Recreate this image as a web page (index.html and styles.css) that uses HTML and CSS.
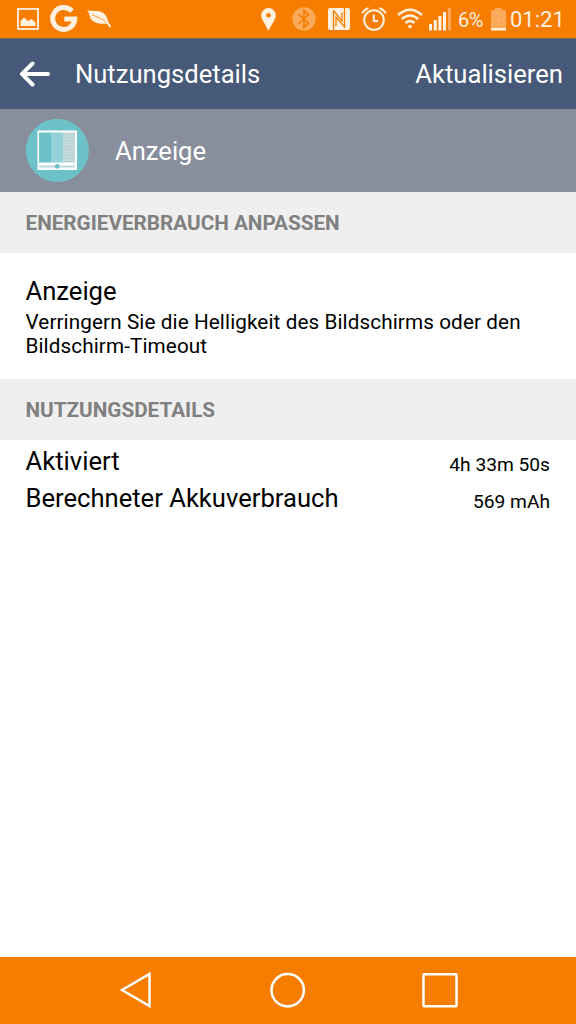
FILE: index.html
```
<!DOCTYPE html>
<html lang="de">
<head>
  <meta charset="UTF-8" />
  <meta name="viewport" content="width=device-width, initial-scale=1" />
  <title>Nutzungsdetails</title>
  <link rel="stylesheet" href="styles.css">
</head>
<body>
  <header class="status-bar">
    <div class="notifications">
      <!-- picture -->
      <svg width="22" height="22" viewBox="0 0 22 22">
        <rect x="1" y="1" width="20" height="20" fill="none" stroke="#fff0e0" stroke-width="1.800" />
        <path d="M3.500 18V13L7 9.500L11 13L14.500 11L18.500 14.500V18Z" fill="#fff0e0" />
      </svg>
      <!-- google -->
      <svg class="google" width="28" height="28" viewBox="0 0 28 28">
        <path d="M22 6.200A11 11 0 1 0 24.700 14H14.300" fill="none" stroke="#fff0e0" stroke-width="5" />
      </svg>
      <!-- leaf -->
      <svg class="leaf" width="25" height="18" viewBox="0 0 25 18">
        <path d="M0 .5C7 1.500 14-.5 18 4.500C20 7 20.500 9.500 21.500 12L24.300 17L22.500 17.500L20 13.500C11 15 4 11.500 3 7C2.500 4.500 2 2.500 0 .5Z" fill="#fff0e0" />
        <path d="M5 5C10 6.500 15 8.500 19 12" fill="none" stroke="#f77d00" stroke-width=".7" />
      </svg>
    </div>
    <div class="system-icons">
      <!-- location -->
      <svg width="15" height="23" viewBox="0 0 15 23">
        <path d="M7.500 0A7.300 7.300 0 0 0 .2 7.300C.2 12 5 17 7.500 23C10 17 14.800 12 14.800 7.300A7.300 7.300 0 0 0 7.500 0Z" fill="#fff0e0" />
        <circle cx="7.500" cy="7.200" r="2.300" fill="#f77d00" />
      </svg>
      <!-- bluetooth -->
      <svg class="bluetooth" width="24" height="24" viewBox="0 0 24 24">
        <circle cx="12" cy="12" r="11.700" fill="#fbaa5a" />
        <path d="M6.500 7L16.500 16.500L12 20.500V3.500L16.500 7.500L6.500 17" fill="none" stroke="#f77d00" stroke-width="1.700" />
      </svg>
      <!-- nfc -->
      <svg class="nfc" width="22" height="22" viewBox="0 0 22 22">
        <rect width="22" height="22" rx="2" fill="#fff0e0" />
        <path d="M5.500 22V2.500M5.500 2.500L14 13V4.500M16.500 0V19L8 9V18" fill="none" stroke="#f77d00" stroke-width="1.300" />
      </svg>
      <!-- alarm -->
      <svg class="alarm" width="26" height="24" viewBox="0 0 26 24">
        <g fill="none" stroke="#fff0e0" stroke-width="2">
          <circle cx="13" cy="13" r="9.800" />
          <path d="M12.800 7.500V14H17" />
          <path d="M1 6.200Q3.200 2.500 7.500 1M25 6.200Q22.800 2.500 18.500 1" />
        </g>
      </svg>
      <!-- wifi -->
      <svg class="wifi" width="26" height="21" viewBox="0 0 26 21">
        <g fill="none" stroke="#fff0e0" stroke-width="2.600">
          <path d="M1 7Q13-3.500 25 7" />
          <path d="M4.800 11Q13 4 21.200 11" />
          <path d="M8.500 15Q13 11 17.500 15" />
        </g>
        <circle cx="13" cy="18.500" r="1.800" fill="#fff0e0" />
      </svg>
      <!-- signal -->
      <svg class="signal" width="22" height="23" viewBox="0 0 22 23">
        <path d="M0 16H3V22.500H0ZM4.800 12H7.800V22.500H4.800ZM9.400 8H12.400V22.500H9.400ZM14 4H17V22.500H14Z" fill="#fff0e0" />
        <path d="M19 0H22V22.500H19Z" fill="#fbaa5a" />
      </svg>
      <span class="percent">6%</span>
      <!-- battery -->
      <svg class="battery" width="15" height="23" viewBox="0 0 15 23">
        <path d="M4 0H11V2H13Q15 2 15 4V20H0V4Q0 2 2 2H4Z" fill="#fbaa5a" />
        <rect y="20" width="15" height="2.500" fill="#fff0e0" />
        <rect x="7" y="12" width="1" height="1" fill="#fff0e0" />
      </svg>
      <span class="clock">01:21</span>
    </div>
  </header>

  <nav class="toolbar">
    <svg class="back" width="32" height="26" viewBox="0 0 32 26">
      <path d="M13.500 2.500L3 13L13.500 23.500M3.500 13H29" fill="none" stroke="#fff" stroke-width="4" stroke-linecap="round" stroke-linejoin="round" />
    </svg>
    <h1>Nutzungsdetails</h1>
    <span class="refresh">Aktualisieren</span>
  </nav>

  <div class="app-header">
    <svg width="64" height="64" viewBox="0 0 64 64">
      <circle cx="32.300" cy="31.500" r="31.600" fill="#6dc1c8" />
      <rect x="12.500" y="11.500" width="39.500" height="39.500" fill="#fff" />
      <rect x="14" y="13.500" width="12" height="30" fill="#6dc1c8" />
      <rect x="26" y="13.500" width="12" height="30" fill="#93d2d8" />
      <rect x="38" y="13.500" width="12" height="30" fill="#c5d8da" />
      <path d="M38.500 15.500H49M39.500 18.500H49M38.500 21.500H49M39.500 24.500H49M38.500 27.500H49M39.500 30.500H49M38.500 33.500H49M39.500 36.500H49M38.500 39.500H49M39.500 42.500H49" stroke="#8fc8cd" stroke-dasharray="1 2" />
      <path d="M14 47.500H50" stroke="#b9d7da" stroke-width="2" />
      <circle cx="32.200" cy="47.300" r="2.400" fill="#6dc1c8" />
    </svg>
    <span class="app-name">Anzeige</span>
  </div>

  <main>
    <h2>ENERGIEVERBRAUCH ANPASSEN</h2>
    <div class="setting">
      <div class="setting-title">Anzeige</div>
      <p>Verringern Sie die Helligkeit des Bildschirms oder den Bildschirm-Timeout</p>
    </div>

    <h2>NUTZUNGSDETAILS</h2>
    <div class="row">
      <span class="label">Aktiviert</span>
      <span class="value">4h 33m 50s</span>
    </div>
    <div class="row">
      <span class="label">Berechneter Akkuverbrauch</span>
      <span class="value">569 mAh</span>
    </div>
  </main>

  <footer class="nav-bar">
    <svg width="32" height="36" viewBox="0 0 32 36">
      <path d="M29.500 2V34L2 18Z" fill="none" stroke="#fff" stroke-width="2.500" />
    </svg>
    <svg width="36" height="36" viewBox="0 0 36 36">
      <circle cx="18.700" cy="18.200" r="16.200" fill="none" stroke="#fff" stroke-width="2.500" />
    </svg>
    <svg width="36" height="36" viewBox="0 0 36 36">
      <rect x="1.500" y="2.200" width="33" height="32" rx=".5" fill="none" stroke="#fff" stroke-width="2.500" />
    </svg>
  </footer>
</body>
</html>
```
FILE: styles.css
```
* {
  box-sizing: border-box;
}
body {
  margin: 0;
  height: 1024px;
  display: flex;
  flex-direction: column;
  font-family: Roboto, sans-serif;
  background: #fff;
  color: #000;
  overflow: hidden;
}
svg {
  display: block;
  flex: none;
}
.status-bar {
  height: 39px;
  padding: 0 12px 0 17px;
  display: flex;
  justify-content: space-between;
  background: #f77d00;
  border-bottom: 1px solid #80664f;
  color: #fff0e0;
}
.notifications, .system-icons {
  display: flex;
  align-items: center;
}
.google {
  margin-left: 11px;
}
.leaf {
  margin-left: 9px;
}
.bluetooth {
  margin-left: 16px;
}
.nfc {
  margin-left: 12px;
}
.alarm {
  margin-left: 11px;
}
.wifi {
  margin: 0 0 2px 10px;
}
.signal {
  margin-left: 6px;
}
.percent {
  width: 27px;
  margin: 2px 0 0 7px;
  font-size: 20px;
  line-height: 38px;
  letter-spacing: -0.4px;
}
.battery {
  margin-left: 6px;
}
.clock {
  width: 54px;
  margin: 2px 0 0 4px;
  font-size: 22px;
  line-height: 38px;
  white-space: nowrap;
}
.toolbar {
  height: 70px;
  padding: 0 13px 0 19px;
  display: flex;
  align-items: center;
  background: #465979;
  color: #fff;
  font-size: 25.6px;
}
.back {
  margin-bottom: 1px;
}
.toolbar h1 {
  margin: 0 0 1px 24px;
  font-size: 25.6px;
  font-weight: 400;
}
.refresh {
  margin: 0 0 1px auto;
}
.app-header {
  height: 83px;
  padding-left: 25px;
  display: flex;
  align-items: center;
  gap: 26px;
  background: #888e9b;
  color: #fff;
}
.app-name {
  font-size: 25.6px;
}
main {
  flex: 1;
}
h2 {
  height: 61px;
  margin: 0;
  padding: 1px 25.500px 0;
  font-size: 20.7px;
  line-height: 61px;
  font-weight: 700;
  background: #efefef;
  color: #808080;
}
.setting {
  height: 126px;
  padding: 22px 25.500px 0;
}
.setting-title {
  font-size: 25.6px;
  line-height: 32px;
}
.setting p {
  margin: 3px 0 0;
  font-size: 20.7px;
  line-height: 24px;
  letter-spacing: 0.1px;
}
.row {
  height: 37px;
  padding: 0 26px 0 25.500px;
  display: flex;
  justify-content: space-between;
  align-items: center;
}
.label {
  margin-top: 4px;
  font-size: 25.6px;
}
.value {
  margin-top: 12px;
  font-size: 19.2px;
}
.nav-bar {
  height: 67px;
  padding: 0 118px 2px 120px;
  display: flex;
  justify-content: space-between;
  align-items: center;
  background: #f77d00;
}
```
